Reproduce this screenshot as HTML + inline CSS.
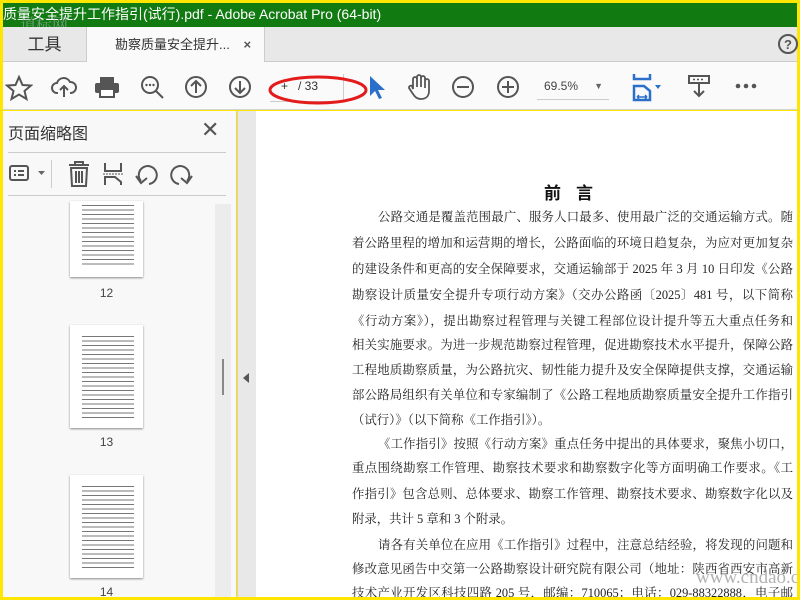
<!DOCTYPE html>
<html><head><meta charset="utf-8"><style>
*{margin:0;padding:0;box-sizing:border-box}
body{width:800px;height:600px;overflow:hidden;background:#ffe600;position:relative;font-family:"Liberation Sans","Noto Sans CJK SC",sans-serif}
.a{position:absolute}
.title{left:3px;top:3px;width:794px;height:24px;background:#117a11;color:#fff;font-size:14px;line-height:22px;padding-left:0;white-space:nowrap}
.tabs{left:3px;top:27px;width:794px;height:35px;background:#e8e8e8;border-bottom:1px solid #ccc}
.tool{left:3px;top:62px;width:794px;height:48px;background:#fafafa;border-bottom:1px solid #d4d4d4}
.panel{left:3px;top:111px;width:234px;height:486px;background:#f8f8f8;border-right:1px solid #ccc}
.strip{left:238px;top:111px;width:18px;height:486px;background:#e8e8e8}
.page{left:256px;top:111px;width:541px;height:486px;background:#fff;overflow:hidden}
.txt{position:absolute;left:96px;width:441px;font-family:"Liberation Serif","Noto Serif CJK SC",serif;font-size:12.4px;color:#222;white-space:nowrap;text-align:justify;text-align-last:justify;line-height:16px}
.ic{stroke:#555;fill:none;stroke-width:2}
.th{position:absolute;left:70px;width:73px;background:#fff;box-shadow:0 1px 2px #888;
background-image:repeating-linear-gradient(#fff 0 2px,#777 2px 3px,#fff 3px 4.5px);background-size:52px 100%;background-repeat:no-repeat;background-position:12px 8px}
.lab{position:absolute;left:70px;width:73px;text-align:center;font-size:12px;color:#444}
</style></head><body>
<div class="a title">质量安全提升工作指引(试行).pdf - Adobe Acrobat Pro (64-bit)</div>
<div class="a" style="left:20px;top:12px;color:#9aa;font-size:16px;opacity:.7;font-family:'Noto Serif CJK SC',serif">道标网</div>
<div class="a tabs">
 <div class="a" style="left:0;top:0;width:83px;height:35px;font-size:17px;line-height:35px;text-align:center;color:#333">工具</div>
 <div class="a" style="left:83px;top:0;width:179px;height:36px;background:#fafafa;border-left:1px solid #ccc;border-right:1px solid #ccc;font-size:13px;line-height:36px;color:#333;padding-left:28px">勘察质量安全提升... <span style="margin-left:10px;font-weight:bold;color:#555">×</span></div>
 <svg class="a" style="left:774px;top:6px" width="22" height="22"><circle cx="11" cy="11" r="9" class="ic"/><text x="11" y="16" text-anchor="middle" font-size="13" font-weight="bold" fill="#555" font-family="Liberation Sans">?</text></svg>
</div>
<div class="a tool">
 <svg class="a" style="left:2px;top:13px" width="28" height="26"><polygon points="14,2 17.5,10 26,10.5 19.5,16 21.5,24 14,19.5 6.5,24 8.5,16 2,10.5 10.5,10" class="ic"/></svg>
 <svg class="a" style="left:48px;top:12px" width="26" height="26"><path d="M7 19H6a5 5 0 0 1 0-10 7 7 0 0 1 13-1 5 5 0 0 1 1 11h-1M13 23V12M9 16l4-4 4 4" class="ic"/></svg>
 <svg class="a" style="left:91px;top:13px" width="26" height="24"><path d="M6 2h14v6H6z" fill="#555"/><rect x="1" y="8" width="24" height="10" rx="2" fill="#555"/><rect x="6" y="14" width="14" height="8" fill="#fff" stroke="#555" stroke-width="2"/></svg>
 <svg class="a" style="left:136px;top:12px" width="26" height="26"><circle cx="11" cy="11" r="8" class="ic"/><path d="M17 17l7 7" class="ic" stroke-width="3"/><circle cx="7.5" cy="11" r="1.2" fill="#555"/><circle cx="11" cy="11" r="1.2" fill="#555"/><circle cx="14.5" cy="11" r="1.2" fill="#555"/></svg>
 <svg class="a" style="left:181px;top:13px" width="24" height="24"><circle cx="12" cy="12" r="10" class="ic"/><path d="M12 18V6M7 11l5-5 5 5" class="ic"/></svg>
 <svg class="a" style="left:225px;top:13px" width="24" height="24"><circle cx="12" cy="12" r="10" class="ic"/><path d="M12 6v12M7 13l5 5 5-5" class="ic"/></svg>
 <div class="a" style="left:267px;top:12px;width:74px;height:28px;border-bottom:1px solid #ccc;border-right:1px solid #ccc;font-size:12px;line-height:24px;color:#333;padding-left:11px">+&nbsp;&nbsp;&nbsp;/ 33</div>
 <svg class="a" style="left:260px;top:8px" width="110" height="42"><ellipse cx="55" cy="20" rx="48" ry="13" fill="none" stroke="#e31b1b" stroke-width="3"/></svg>
 <svg class="a" style="left:364px;top:12px" width="18" height="26"><path d="M3 2v20l5-5 4 8 3-1-4-8h7z" fill="#2a6fc9"/></svg>
 <svg class="a" style="left:403px;top:11px" width="26" height="28"><path d="M7 16V6a2 2 0 0 1 4 0v8V4a2 2 0 0 1 4 0v10V5a2 2 0 0 1 4 0v10V8a2 2 0 0 1 4 0v10c0 5-3 8-8 8-4 0-6-2-8-5l-4-6a2 2 0 0 1 3-2z" fill="none" stroke="#555" stroke-width="1.8"/></svg>
 <svg class="a" style="left:448px;top:13px" width="24" height="24"><circle cx="12" cy="12" r="10" class="ic"/><path d="M6 12h12" class="ic"/></svg>
 <svg class="a" style="left:493px;top:13px" width="24" height="24"><circle cx="12" cy="12" r="10" class="ic"/><path d="M6 12h12M12 6v12" class="ic"/></svg>
 <div class="a" style="left:534px;top:12px;width:72px;height:26px;border-bottom:1px solid #ccc;font-size:12px;line-height:24px;color:#444;padding-left:7px">69.5%<span style="position:absolute;right:6px;top:0;font-size:9px;color:#666">▼</span></div>
 <svg class="a" style="left:628px;top:10px" width="36" height="30"><path d="M3 2v5h16V2M3 28V14h10l6 5v9z" stroke="#2a6fc9" stroke-width="2.5" fill="none"/><path d="M6 25h10M6 25l2-2M6 25l2 2M16 25l-2-2M16 25l-2 2" stroke="#2a6fc9" stroke-width="1.5"/><path d="M24 13h6l-3 4z" fill="#2a6fc9"/></svg>
 <svg class="a" style="left:684px;top:12px" width="24" height="28"><rect x="2" y="2" width="20" height="7" fill="none" stroke="#555" stroke-width="2"/><path d="M6 5.5h2M10 5.5h2M14 5.5h2" stroke="#555" stroke-width="1.5"/><path d="M12 10v12M7 17l5 5 5-5" class="ic"/></svg>
 <svg class="a" style="left:731px;top:20px" width="24" height="8"><circle cx="4" cy="4" r="2.3" fill="#555"/><circle cx="12" cy="4" r="2.3" fill="#555"/><circle cx="20" cy="4" r="2.3" fill="#555"/></svg>
</div>
<div class="a panel">
 <div class="a" style="left:5px;top:9px;font-size:16px;color:#333">页面缩略图</div>
 <div class="a" style="left:198px;top:6px;font-size:22px;color:#555">✕</div>
 <div class="a" style="left:5px;top:41px;width:218px;height:1px;background:#ccc"></div>
 <svg class="a" style="left:5px;top:50px" width="40" height="24"><rect x="2" y="5" width="18" height="14" rx="2" class="ic"/><path d="M6 10h2M6 14h2M10 10h6M10 14h6" stroke="#555" stroke-width="2"/><path d="M30 10h7l-3.5 4z" fill="#666"/></svg>
 <div class="a" style="left:48px;top:49px;width:1px;height:28px;background:#ccc"></div>
 <svg class="a" style="left:64px;top:49px" width="24" height="28"><path d="M2 5h20M8 5V2h8v3M4 8h16l-1 18H5zM9 11v12M12 11v12M15 11v12" class="ic"/></svg>
 <svg class="a" style="left:98px;top:50px" width="24" height="26"><path d="M4 2v8h16V2M4 24v-8h10l6 5v3" class="ic" stroke-width="2.5"/><path d="M2 13h20" stroke="#555" stroke-dasharray="2 1"/></svg>
 <svg class="a" style="left:132px;top:51px" width="24" height="24"><path d="M6 19a9 9 0 1 1 8 3" class="ic" stroke-width="2.5"/><path d="M1 14l5 7 6-5" class="ic" stroke-width="2.5"/></svg>
 <svg class="a" style="left:166px;top:51px" width="24" height="24"><path d="M18 19a9 9 0 1 0-8 3" class="ic" stroke-width="2.5"/><path d="M23 14l-5 7-6-5" class="ic" stroke-width="2.5"/></svg>
 <div class="a" style="left:5px;top:84px;width:218px;height:1px;background:#ccc"></div>
 <div class="a" style="left:212px;top:93px;width:16px;height:393px;background:#ececec"></div>
 <div class="a" style="left:219px;top:248px;width:2px;height:36px;background:#888"></div>
</div>
<div class="th" style="top:201px;height:76px;background-size:52px 62px;background-position:12px 2px"></div>
<div class="lab" style="top:286px">12</div>
<div class="th" style="top:325px;height:103px;background-size:52px 84px;background-position:12px 9px"></div>
<div class="lab" style="top:435px">13</div>
<div class="th" style="top:475px;height:103px;background-size:52px 84px;background-position:12px 9px"></div>
<div class="lab" style="top:585px">14</div>
<div class="a strip"><div class="a" style="left:5px;top:262px;width:0;height:0;border-top:5px solid transparent;border-bottom:5px solid transparent;border-right:6px solid #555"></div></div>
<div class="a page">
 <div class="a" style="left:288px;top:68px;font-size:17px;font-weight:bold;font-family:'Noto Sans CJK SC',sans-serif;color:#111;letter-spacing:15px">前言</div>
 <div class="txt" style="top:98px;left:122px;width:415px">公路交通是覆盖范围最广、服务人口最多、使用最广泛的交通运输方式。随</div>
 <div class="txt" style="top:124px">着公路里程的增加和运营期的增长，公路面临的环境日趋复杂，为应对更加复杂</div>
 <div class="txt" style="top:150px">的建设条件和更高的安全保障要求，交通运输部于 2025 年 3 月 10 日印发《公路</div>
 <div class="txt" style="top:176px">勘察设计质量安全提升专项行动方案》（交办公路函〔2025〕481 号，以下简称</div>
 <div class="txt" style="top:202px">《行动方案》），提出勘察过程管理与关键工程部位设计提升等五大重点任务和</div>
 <div class="txt" style="top:226px">相关实施要求。为进一步规范勘察过程管理，促进勘察技术水平提升，保障公路</div>
 <div class="txt" style="top:251px">工程地质勘察质量，为公路抗灾、韧性能力提升及安全保障提供支撑，交通运输</div>
 <div class="txt" style="top:276px">部公路局组织有关单位和专家编制了《公路工程地质勘察质量安全提升工作指引</div>
 <div class="txt" style="top:301px;text-align-last:left">（试行）》（以下简称《工作指引》）。</div>
 <div class="txt" style="top:325px;left:122px;width:415px">《工作指引》按照《行动方案》重点任务中提出的具体要求，聚焦小切口，</div>
 <div class="txt" style="top:349px">重点围绕勘察工作管理、勘察技术要求和勘察数字化等方面明确工作要求。《工</div>
 <div class="txt" style="top:375px">作指引》包含总则、总体要求、勘察工作管理、勘察技术要求、勘察数字化以及</div>
 <div class="txt" style="top:400px;text-align-last:left">附录，共计 5 章和 3 个附录。</div>
 <div class="txt" style="top:426px;left:122px;width:415px">请各有关单位在应用《工作指引》过程中，注意总结经验，将发现的问题和</div>
 <div class="txt" style="top:450px">修改意见函告中交第一公路勘察设计研究院有限公司（地址：陕西省西安市高新</div>
 <div class="txt" style="top:474px">技术产业开发区科技四路 205 号，邮编：710065；电话：029-88322888，电子邮</div>
 <div class="a" style="left:440px;top:456px;font-size:19px;color:#999;opacity:.75;font-family:'Liberation Serif',serif">www.cndao.com</div>
</div>
</body></html>
